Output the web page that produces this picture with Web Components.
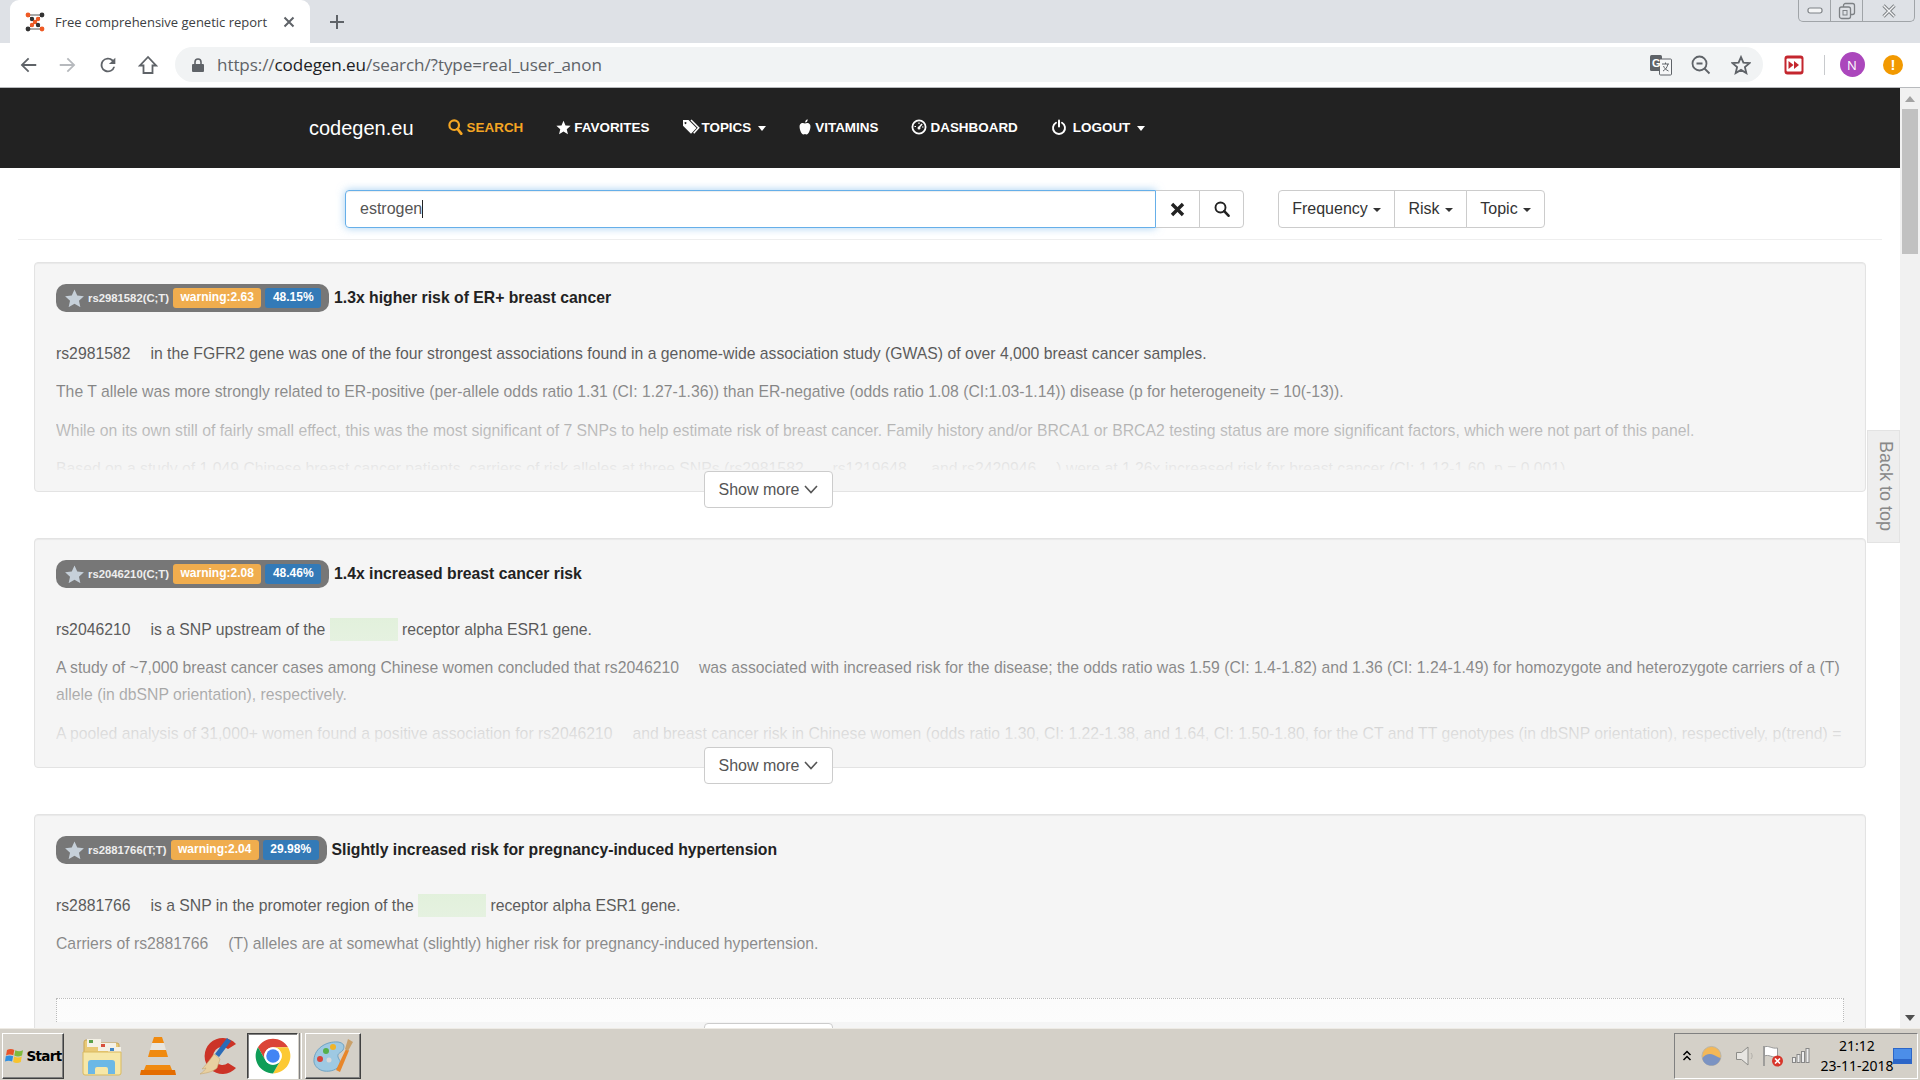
<!DOCTYPE html>
<html lang="en">
<head>
<meta charset="utf-8">
<title>Free comprehensive genetic report</title>
<style>
  html, body { margin: 0; padding: 0; height: 100%; overflow: hidden; background: #fff; }
  body { font-family: "Liberation Sans", Arial, sans-serif; }
</style>
</head>
<body>
<browser-window>
  <chrome-tabs slot="tabs" title="Free comprehensive genetic report"></chrome-tabs>
  <chrome-toolbar slot="toolbar" url-origin="codegen.eu" url-path="/search/?type=real_user_anon"></chrome-toolbar>
  <page-scrollbar slot="scrollbar"></page-scrollbar>
  <win-taskbar slot="taskbar"></win-taskbar>

  <site-navbar></site-navbar>
  <search-bar value="estrogen"></search-bar>

  <snp-card rs="rs2981582(C;T)" warning="warning:2.63" freq="48.15%" heading="1.3x higher risk of ER+ breast cancer">
    <p>rs2981582<snp-gap></snp-gap>in the FGFR2 gene was one of the four strongest associations found in a genome-wide association study (GWAS) of over 4,000 breast cancer samples.</p>
    <p>The T allele was more strongly related to ER-positive (per-allele odds ratio 1.31 (CI: 1.27-1.36)) than ER-negative (odds ratio 1.08 (CI:1.03-1.14)) disease (p for heterogeneity = 10(-13)).</p>
    <p>While on its own still of fairly small effect, this was the most significant of 7 SNPs to help estimate risk of breast cancer. Family history and/or BRCA1 or BRCA2 testing status are more significant factors, which were not part of this panel.</p>
    <p>Based on a study of 1,049 Chinese breast cancer patients, carriers of risk alleles at three SNPs (rs2981582<snp-gap></snp-gap>, rs1219648<snp-gap></snp-gap> and rs2420946<snp-gap></snp-gap>) were at 1.26x increased risk for breast cancer (CI: 1.12-1.60, p = 0.001).</p>
  </snp-card>

  <snp-card rs="rs2046210(C;T)" warning="warning:2.08" freq="48.46%" heading="1.4x increased breast cancer risk">
    <p>rs2046210<snp-gap></snp-gap>is a SNP upstream of the <gene-mark></gene-mark> receptor alpha ESR1 gene.</p>
    <p>A study of ~7,000 breast cancer cases among Chinese women concluded that rs2046210<snp-gap></snp-gap>was associated with increased risk for the disease; the odds ratio was 1.59 (CI: 1.4-1.82) and 1.36 (CI: 1.24-1.49) for homozygote and heterozygote carriers of a (T) allele (in dbSNP orientation), respectively.</p>
    <p>A pooled analysis of 31,000+ women found a positive association for rs2046210<snp-gap></snp-gap>and breast cancer risk in Chinese women (odds ratio 1.30, CI: 1.22-1.38, and 1.64, CI: 1.50-1.80, for the CT and TT genotypes (in dbSNP orientation), respectively, p(trend) =</p>
  </snp-card>

  <snp-card rs="rs2881766(T;T)" warning="warning:2.04" freq="29.98%" heading="Slightly increased risk for pregnancy-induced hypertension">
    <p>rs2881766<snp-gap></snp-gap>is a SNP in the promoter region of the <gene-mark></gene-mark> receptor alpha ESR1 gene.</p>
    <p>Carriers of rs2881766<snp-gap></snp-gap>(T) alleles are at somewhat (slightly) higher risk for pregnancy-induced hypertension.</p>
    <snp-embed></snp-embed>
  </snp-card>

  <back-to-top></back-to-top>
</browser-window>

<script>
const navIcons = {
  search: '<svg width="15" height="16" viewBox="0 0 15 16"><circle cx="6.2" cy="6.2" r="4.8" fill="none" stroke="currentColor" stroke-width="2.2"/><path d="M9.6 10l3.6 4.6" stroke="currentColor" stroke-width="2.8" stroke-linecap="round"/></svg>',
  star: '<svg width="15" height="15" viewBox="0 0 24 24"><path fill="currentColor" d="M12 1l3.2 7.6 8.2.7-6.2 5.4 1.9 8L12 18.4 4.900 22.700l1.900-8L.6 9.300l8.200-.7z"/></svg>',
  tags: '<svg width="18" height="16" viewBox="0 0 18 16"><path fill="currentColor" d="M1 1h5.500l8 8-5.500 5.800-8-8zM3.500 3a1 1 0 1 0 .01 0z" fill-rule="evenodd"/><path fill="none" stroke="currentColor" stroke-width="1.500" d="M9 1l7.700 7.800-5 5.400"/></svg>',
  apple: '<svg width="12" height="16" viewBox="0 0 12 16"><path fill="currentColor" d="M6 4.500C7.500 3.800 10.500 3.600 11.300 6.200 12 9.200 9.800 15.500 7.500 15.500 6.800 15.500 6.400 15 6 15 5.600 15 5.200 15.500 4.500 15.500 2.200 15.500 0 9.200.7 6.200 1.500 3.600 4.500 3.800 6 4.500zM6.200 3.600C6 2 7 .6 8.600.2 8.900 1.900 7.800 3.300 6.200 3.600z"/></svg>',
  dashboard: '<svg width="16" height="16" viewBox="0 0 16 16"><circle cx="8" cy="8" r="6.600" fill="none" stroke="currentColor" stroke-width="1.800"/><path d="M8 8.500l3-3.500" stroke="currentColor" stroke-width="1.600"/><path d="M3.500 7.500h1.500M11 8h1.500M8 3.500v1.500" stroke="currentColor" stroke-width="1.200"/><circle cx="8" cy="9" r="1.500" fill="currentColor"/></svg>',
  power: '<svg width="16" height="17" viewBox="0 0 16 17"><path d="M5 3.800a6 6 0 1 0 6 0" fill="none" stroke="currentColor" stroke-width="1.900" stroke-linecap="round"/><path d="M8 1.500v6" stroke="currentColor" stroke-width="2" stroke-linecap="round"/></svg>',
}

// Tabs row, with the window buttons on the far right
class ChromeTabs extends HTMLElement {
  connectedCallback() {
    const shadow = this.attachShadow({ mode: 'open' })
    shadow.innerHTML = `
      <style>
        :host { display: flex; height: 43px; background: #dee1e6; font-family: "Open Sans", sans-serif; }
        .tab {
          display: flex;
          align-items: center;
          box-sizing: border-box;
          width: 300px;
          margin-left: 10px;
          padding: 0 15px 0 15px;
          background: #fff;
          border-radius: 9px 9px 0 0;
          gap: 10px;
        }
        .title {
          flex: 1;
          white-space: nowrap;
          font-size: 13px;
          color: #3c4043;
        }
        .plus { width: 54px; display: flex; align-items: center; justify-content: center; }
        .win {
          display: flex;
          align-self: flex-start;
          box-sizing: border-box;
          height: 22px;
          margin: 0 5px 0 auto;
          border: 1px solid #a0a4a8;
          border-top: 0;
          border-radius: 0 0 5px 5px;
        }
        .win div { display: flex; align-items: center; justify-content: center; height: 100%; border-left: 1px solid #a0a4a8; }
        .win div:first-child { border-left: 0; }
      </style>
      <div class="tab">
        <svg width="20" height="20" viewBox="0 0 20 20">
          <path d="M3 3h14M3 17h14M3 3l14 14M17 3L3 17" stroke="#555" stroke-width="1"/>
          <circle cx="3" cy="3" r="2.400" fill="#ef5a24"/><circle cx="17" cy="3" r="2.400" fill="#333"/>
          <circle cx="7" cy="7" r="2.200" fill="#333"/><circle cx="13" cy="7" r="2.200" fill="#ef5a24"/>
          <circle cx="10" cy="10" r="2.200" fill="#ef5a24"/>
          <circle cx="7" cy="13" r="2.200" fill="#ef5a24"/><circle cx="13" cy="13" r="2.200" fill="#333"/>
          <circle cx="3" cy="17" r="2.400" fill="#333"/><circle cx="17" cy="17" r="2.400" fill="#ef5a24"/>
        </svg>
        <div class="title">${this.getAttribute('title')}</div>
        <svg width="12" height="12" viewBox="0 0 12 12"><path d="M1.500 1.500l9 9M10.500 1.500l-9 9" stroke="#5f6368" stroke-width="2"/></svg>
      </div>
      <div class="plus">
        <svg width="16" height="16" viewBox="0 0 16 16"><path d="M8 1v14M1 8h14" stroke="#5f6368" stroke-width="2"/></svg>
      </div>
      <div class="win">
        <div style="width:31px"><svg width="16" height="8" viewBox="0 0 16 8"><rect x="1" y="1" width="14" height="5" rx="2" fill="#f4f5f6" stroke="#7d8185" stroke-width="1.200"/></svg></div>
        <div style="width:31px"><svg width="18" height="18" viewBox="0 0 18 18"><rect x="5.500" y="1.500" width="11" height="11" rx="2" fill="none" stroke="#7d8185" stroke-width="1.300"/><rect x="1.500" y="5" width="11" height="11.500" rx="2" fill="#dee1e6" stroke="#7d8185" stroke-width="1.300"/><rect x="5" y="8.500" width="4" height="4.500" fill="none" stroke="#7d8185"/></svg></div>
        <div style="width:51px"><svg width="16" height="14" viewBox="0 0 16 14"><path d="M2.500 1.500l11 11M13.500 1.500l-11 11" stroke="#7d8185" stroke-width="3.200"/><path d="M2.500 1.500l11 11M13.500 1.500l-11 11" stroke="#f4f5f6" stroke-width="1.400"/></svg></div>
      </div>
    `
  }
}

// Back / forward / reload / home, the address bar and the extension icons
class ChromeToolbar extends HTMLElement {
  connectedCallback() {
    const shadow = this.attachShadow({ mode: 'open' })
    shadow.innerHTML = `
      <style>
        :host {
          display: flex;
          align-items: center;
          box-sizing: border-box;
          height: 45px;
          padding: 0 0 1px 8px;
          background: #fff;
          border-bottom: 1px solid #b8babd;
          font-family: "Open Sans", sans-serif;
        }
        .btn { display: flex; align-items: center; justify-content: center; width: 40px; height: 34px; flex: none; }
        .address {
          display: flex;
          align-items: center;
          width: 1588px;
          height: 35px;
          margin: 0 11px 0 7px;
          padding-left: 16px;
          box-sizing: border-box;
          background: #f1f3f4;
          border-radius: 18px;
          flex: none;
        }
        .url { flex: 1; margin-left: 12px; font-size: 17.100px; color: #5f6368; white-space: nowrap; letter-spacing: -.1px; }
        .url b { font-weight: 400; color: #202124; }
        .sep { width: 1px; height: 20px; margin: 0 8px 0 10px; background: #c8cacd; flex: none; }
        .avatar {
          display: flex; align-items: center; justify-content: center;
          width: 25px; height: 25px;
          border-radius: 50%;
          background: #ab47bc;
          color: #fff;
          font-size: 13px;
        }
        .alert {
          display: flex; align-items: center; justify-content: center;
          width: 20px; height: 20px;
          border-radius: 50%;
          background: #f29900;
          color: #fff;
          font: bold 15px "Liberation Sans", sans-serif;
        }
      </style>
      <div class="btn"><svg width="22" height="22" viewBox="0 0 24 24"><path fill="#5f6368" d="M21 11H7.800l5.600-5.600L12 4l-8 8 8 8 1.400-1.400L7.800 13H21z"/></svg></div>
      <div class="btn"><svg width="22" height="22" viewBox="0 0 24 24"><path fill="#b6b9bd" d="M3 11h13.200l-5.600-5.600L12 4l8 8-8 8-1.400-1.400 5.600-5.600H3z"/></svg></div>
      <div class="btn"><svg width="22" height="22" viewBox="0 0 24 24"><path fill="#5f6368" d="M17.650 6.350A8 8 0 1 0 19.730 14h-2.080A6 6 0 1 1 12 6c1.660 0 3.140.690 4.220 1.780L13 11h7V4z"/></svg></div>
      <div class="btn"><svg width="20" height="20" viewBox="0 0 20 20"><path d="M10 2L2 10.500h3.500V18h9v-7.500H18z" fill="none" stroke="#5f6368" stroke-width="1.800" stroke-linejoin="miter"/></svg></div>
      <div class="address">
        <svg width="14" height="16" viewBox="0 0 14 16"><path fill="#5f6368" d="M2 7h10a1 1 0 0 1 1 1v6a1 1 0 0 1-1 1H2a1 1 0 0 1-1-1V8a1 1 0 0 1 1-1z"/><path d="M4 7V5a3 3 0 0 1 6 0v2" fill="none" stroke="#5f6368" stroke-width="1.600"/></svg>
        <div class="url">https://<b>${this.getAttribute('url-origin')}</b>${this.getAttribute('url-path')}</div>
        <div class="btn"><svg width="24" height="24" viewBox="0 0 24 24"><rect x="1" y="2" width="12" height="16" rx="1.500" fill="#5f6368"/><rect x="10.500" y="6" width="12" height="16" rx="1" fill="#f6f7f8" stroke="#5f6368"/><text x="3" y="14" font-size="11" font-weight="700" fill="#fff" font-family="Liberation Sans">G</text><path d="M13 11h7M16.500 9.500v1.500M19 11c-1 4-3 6-5 7M14.500 13c1 2.500 2.800 4 5 5" stroke="#5f6368" fill="none" stroke-width="1"/></svg></div>
        <div class="btn"><svg width="20" height="20" viewBox="0 0 20 20"><circle cx="8.500" cy="8.500" r="7" fill="none" stroke="#5f6368" stroke-width="1.800"/><path d="M5.500 8.500h6M13.500 13.500l5 5" stroke="#5f6368" stroke-width="1.800"/></svg></div>
        <div class="btn" style="margin-right:2px"><svg width="20" height="20" viewBox="0 0 24 24"><path d="M12 2.500l2.900 6.700 7.300.6-5.500 4.800 1.700 7.100L12 17.900l-6.400 3.800 1.700-7.100-5.500-4.800 7.300-.6z" fill="none" stroke="#5f6368" stroke-width="2.200"/></svg></div>
      </div>
      <div class="btn"><svg width="20" height="20" viewBox="0 0 20 20"><rect x=".5" y=".5" width="19" height="19" rx="3" fill="#c4262e"/><rect x="2.500" y="3.500" width="15" height="13" rx="1" fill="#fff"/><path d="M4.500 6l5 4-5 4zM10 6l5 4-5 4z" fill="#c4262e"/></svg></div>
      <div class="sep"></div>
      <div class="btn" style="margin-left:-1px"><div class="avatar">N</div></div>
      <div class="btn" style="margin-left:1px"><div class="alert">!</div></div>
    `
  }
}

class SiteNavbar extends HTMLElement {
  connectedCallback() {
    const shadow = this.attachShadow({ mode: 'open' })
    const links = [
      ['search', 'Search', false, true, 4],
      ['star', 'Favorites', false, false, 3],
      ['tags', 'Topics', true, false, 1],
      ['apple', 'Vitamins', false, false, 4],
      ['dashboard', 'Dashboard', false, false, 3],
      ['power', 'Logout', true, false, 6],
    ]
    shadow.innerHTML = `
      <style>
        :host {
          display: flex;
          align-items: center;
          height: 80px;
          padding-left: 309px;
          gap: 33px;
          background: #222;
          color: #fff;
        }
        .brand { font-size: 20px; margin-right: 1px; }
        a { display: flex; align-items: center; font-size: 13.450px; font-weight: 700; text-transform: uppercase; margin-top: -2px; }
        a.active { color: #f5a623; }
        .caret {
          width: 0; height: 0;
          margin-left: 7px;
          margin-top: 2px;
          border-top: 5px solid #fff;
          border-left: 4px solid transparent;
          border-right: 4px solid transparent;
        }
      </style>
      <span class="brand">codegen.eu</span>
      ${links
        .map(
          ([icon, label, caret, active, gap]) => `
        <a class="${active ? 'active' : ''}">
          <span style="display:flex;margin-right:${gap}px">${navIcons[icon]}</span>${label}${caret ? '<span class="caret"></span>' : ''}
        </a>`,
        )
        .join('')}
    `
  }
}

class SearchBar extends HTMLElement {
  connectedCallback() {
    const shadow = this.attachShadow({ mode: 'open' })
    shadow.innerHTML = `
      <style>
        :host {
          display: flex;
          margin: 0 18px 22px;
          padding: 22px 0 11px 327px;
          border-bottom: 1px solid #eee;
          font-size: 16px;
          color: #333;
        }
        .input {
          display: flex;
          align-items: center;
          box-sizing: border-box;
          width: 811px;
          height: 38px;
          padding-left: 14px;
          border: 1px solid #66afe9;
          border-radius: 4px 0 0 4px;
          box-shadow: inset 0 1px 1px rgba(0, 0, 0, .075), 0 0 8px rgba(102, 175, 233, .6);
          color: #555;
        }
        .caret { width: 1px; height: 18px; background: #222; }
        .btn {
          display: flex;
          align-items: center;
          justify-content: center;
          box-sizing: border-box;
          height: 38px;
          border: 1px solid #ccc;
          margin-left: -1px;
          background: #fff;
        }
        .last { border-radius: 0 4px 4px 0; }
        .first { border-radius: 4px 0 0 4px; margin-left: 34px; }
        .tri {
          width: 0; height: 0;
          margin-left: 5px;
          margin-top: 2px;
          border-top: 4.500px solid #333;
          border-left: 4.500px solid transparent;
          border-right: 4.500px solid transparent;
        }
      </style>
      <div class="input">${this.getAttribute('value')}<span class="caret"></span></div>
      <div class="btn" style="width:44px;margin-left:0;border-left:0"><svg width="15" height="15" viewBox="0 0 15 15"><path d="M2 2l11 11M13 2L2 13" stroke="#222" stroke-width="3.400"/></svg></div>
      <div class="btn last" style="width:45px"><svg width="16" height="16" viewBox="0 0 16 16"><circle cx="6.500" cy="6.500" r="5" fill="none" stroke="#222" stroke-width="1.900"/><path d="M10.200 10.200l4.300 4.500" stroke="#222" stroke-width="2.600" stroke-linecap="round"/></svg></div>
      <div class="btn first" style="width:117px">Frequency<span class="tri"></span></div>
      <div class="btn" style="width:73px">Risk<span class="tri"></span></div>
      <div class="btn last" style="width:79px">Topic<span class="tri"></span></div>
    `
  }
}

class SnpBadge extends HTMLElement {
  connectedCallback() {
    const shadow = this.attachShadow({ mode: 'open' })
    shadow.innerHTML = `
      <style>
        :host {
          display: inline-flex;
          align-items: center;
          height: 28px;
          padding: 0 8px 0 9px;
          background: #777;
          border-radius: 10px;
          color: #fff;
          font-weight: 700;
          flex: none;
        }
        svg { margin-right: 4px; }
        .rs { font-size: 11.300px; color: #eee; margin-right: 4px; white-space: nowrap; }
        .label {
          height: 20px;
          padding: 0 7.500px;
          margin-left: 0;
          border-radius: 3px;
          font-size: 12px;
          line-height: 19px;
        }
        .warn { background: #f0ad4e; margin-right: 4px; }
        .freq { background: #337ab7; }
      </style>
      <svg width="19" height="18" viewBox="0 0 24 23"><path fill="#c6d0d9" d="M12 .5l3.500 7.800 8.500.9-6.300 5.700 1.800 8.300L12 18.900l-7.500 4.300 1.800-8.300L0 9.200l8.500-.9z"/></svg>
      <span class="rs">${this.getAttribute('rs')}</span>
      <span class="label warn">${this.getAttribute('warning')}</span>
      <span class="label freq">${this.getAttribute('freq')}</span>
    `
  }
}

// The gap where the site's inline rs link icon does not load
class SnpGap extends HTMLElement {
  connectedCallback() {
    const shadow = this.attachShadow({ mode: 'open' })
    shadow.innerHTML = '<style>:host { display: inline-block; width: 20px; height: 1px; }</style>'
  }
}

class GeneMark extends HTMLElement {
  connectedCallback() {
    const shadow = this.attachShadow({ mode: 'open' })
    shadow.innerHTML = `
      <style>
        :host {
          display: inline-block;
          width: 68px;
          height: 23px;
          vertical-align: -6px;
          background: #dff0d8;
        }
      </style>
    `
  }
}

class SnpEmbed extends HTMLElement {
  connectedCallback() {
    const shadow = this.attachShadow({ mode: 'open' })
    shadow.innerHTML = `
      <style>
        :host {
          display: block;
          position: relative;
          z-index: 1;
          box-sizing: border-box;
          height: 120px;
          margin-top: 41px;
          background: linear-gradient(#fbfbfb, #fff);
          border: 1px dotted #bbb;
        }
      </style>
    `
  }
}

class SnpCard extends HTMLElement {
  connectedCallback() {
    const shadow = this.attachShadow({ mode: 'open' })
    shadow.innerHTML = `
      <style>
        :host {
          display: block;
          position: relative;
          box-sizing: border-box;
          height: 230px;
          margin: 0 34px 46px;
          padding: 21px;
          background: #f5f5f5;
          border: 1px solid #e3e3e3;
          border-radius: 4px;
          box-shadow: inset 0 1px 1px rgba(0, 0, 0, .05);
          color: #333;
          font-size: 15.750px;
          line-height: 27px;
        }
        .content { position: relative; height: 186px; overflow: hidden; }
        .content::after {
          content: '';
          position: absolute;
          inset: 0;
          background: linear-gradient(rgba(245, 245, 245, 0) 20%, #f5f5f5 104%);
        }
        header { display: flex; align-items: center; gap: 5px; height: 28px; margin-bottom: 27.500px; }
        h3 { margin: 0; font-size: 15.750px; font-weight: 700; color: #222; white-space: nowrap; margin-top: -2px; }
        ::slotted(p) { margin: 0 0 11.500px; }
        .more {
          position: absolute;
          z-index: 2;
          top: 208px;
          left: 669px;
          display: flex;
          align-items: center;
          justify-content: center;
          gap: 5px;
          box-sizing: border-box;
          width: 129px;
          height: 37px;
          background: #fff;
          border: 1px solid #ccc;
          border-radius: 4px;
          color: #555;
          font-size: 16px;
        }
      </style>
      <div class="content">
        <header>
          <snp-badge rs="${this.getAttribute('rs')}" warning="${this.getAttribute('warning')}" freq="${this.getAttribute('freq')}"></snp-badge>
          <h3>${this.getAttribute('heading')}</h3>
        </header>
        <slot></slot>
      </div>
      <div class="more">Show more <svg width="14" height="9" viewBox="0 0 14 9"><path d="M1 1l6 6.500L13 1" fill="none" stroke="#555" stroke-width="1.600"/></svg></div>
    `
  }
}

class BackToTop extends HTMLElement {
  connectedCallback() {
    const shadow = this.attachShadow({ mode: 'open' })
    shadow.innerHTML = `
      <style>
        :host {
          position: absolute;
          top: 342px;
          right: 0;
          display: flex;
          align-items: center;
          justify-content: center;
          box-sizing: border-box;
          width: 33px;
          height: 113px;
          padding-left: 3px;
          background: #eee;
          border: 1px solid #e3e3e3;
          color: #888;
          font-size: 18px;
          writing-mode: vertical-rl;
        }
      </style>
      Back to top
    `
  }
}

class PageScrollbar extends HTMLElement {
  connectedCallback() {
    const shadow = this.attachShadow({ mode: 'open' })
    shadow.innerHTML = `
      <style>
        :host {
          display: flex;
          flex-direction: column;
          align-items: center;
          width: 20px;
          height: 100%;
          background: #f1f1f1;
        }
        .up { margin-top: 8px; border-bottom: 6px solid #a3a3a3; border-left: 5px solid transparent; border-right: 5px solid transparent; }
        .thumb { width: 16px; height: 145px; margin-top: 7px; background: #c1c1c1; }
        .down { margin-top: auto; margin-bottom: 7px; border-top: 6px solid #505050; border-left: 5px solid transparent; border-right: 5px solid transparent; }
      </style>
      <div class="up"></div>
      <div class="thumb"></div>
      <div class="down"></div>
    `
  }
}

// Windows classic style taskbar with the launchers and the tray
class WinTaskbar extends HTMLElement {
  connectedCallback() {
    const shadow = this.attachShadow({ mode: 'open' })
    shadow.innerHTML = `
      <style>
        :host {
          display: flex;
          align-items: center;
          box-sizing: border-box;
          height: 52px;
          padding: 2px 2px 0 2px;
          background: #d4d0c8;
          border-top: 1px solid #eeebe5;
          font-family: "Noto Sans", sans-serif;
          color: #000;
        }
        .raised, .sunken {
          display: flex;
          align-items: center;
          justify-content: center;
          box-sizing: border-box;
          height: 46px;
          border: 1px solid;
        }
        .raised { border-color: #fff #404040 #404040 #fff; box-shadow: inset -1px -1px 0 #808080; }
        .sunken { border-color: #404040 #fff #fff #404040; background: #fff; box-shadow: inset 1px 1px 0 #808080; }
        .start { width: 62px; gap: 2px; font: bold 13.500px "DejaVu Sans", sans-serif; letter-spacing: -.7px; }
        .launcher { display: flex; align-items: center; justify-content: center; flex: none; }
        .tray {
          display: flex;
          align-items: center;
          box-sizing: border-box;
          width: 244px;
          height: 46px;
          margin-left: auto;
          padding-left: 7px;
          border: 1px solid;
          border-color: #808080 #fff #fff #808080;
        }
        .clock { width: 76px; margin-left: 9px; font-size: 14px; line-height: 20px; text-align: center; white-space: nowrap; }
      </style>
      <div class="raised start">
        <svg width="20" height="20" viewBox="0 0 20 20">
          <path d="M2 4c2.500-1.300 5-1.300 7.300 0L8.300 9.300C6 8.200 3.500 8.200 1 9.400z" fill="#e8542a"/>
          <path d="M10.300 4.300c2.500 1.300 5 1.300 7.700 0L17 9.600c-2.700 1.300-5.300 1.300-7.700 0z" fill="#7fba3c"/>
          <path d="M.8 10.300c2.500-1.200 5-1.200 7.300-.1L7.100 15.500C4.800 14.400 2.400 14.400 0 15.600z" fill="#2f8fe0"/>
          <path d="M9.100 10.600c2.500 1.300 5 1.300 7.700 0l-1 5.300c-2.700 1.300-5.200 1.300-7.700 0z" fill="#f7c32e"/>
        </svg>
        Start
      </div>
      <div style="width:7px"></div>
      <div class="launcher" style="width:62px">
        <svg width="42" height="40" viewBox="0 0 42 40">
          <path d="M3 6a2 2 0 0 1 2-2h10l3 3h18a2 2 0 0 1 2 2v26a2 2 0 0 1-2 2H5a2 2 0 0 1-2-2z" fill="#e9c976" stroke="#c8a557"/>
          <rect x="6" y="3" width="14" height="8" fill="#f4f1e6"/><rect x="8" y="4" width="4" height="3" fill="#5aa04a"/>
          <rect x="17" y="7" width="18" height="8" fill="#f4f1e6"/><rect x="20" y="8" width="4" height="3" fill="#d8503c"/>
          <rect x="27" y="11" width="13" height="7" fill="#f4f1e6"/><rect x="29" y="12" width="4" height="3" fill="#3f86c8"/>
          <path d="M2 16h38v21a2 2 0 0 1-2 2H4a2 2 0 0 1-2-2z" fill="#f6e7a8" stroke="#d9b95f"/>
          <path d="M7 38V27a3 3 0 0 1 3-3h21a3 3 0 0 1 3 3v11h-7v-5a2 2 0 0 0-2-2H16a2 2 0 0 0-2 2v5z" fill="#6bb8e6"/>
        </svg>
      </div>
      <div class="launcher" style="width:50px">
        <svg width="36" height="40" viewBox="0 0 36 40">
          <path d="M14 1h8l2 6H12z" fill="#f08a10"/><path d="M12 7h12l2 7H10z" fill="#e8e6e0"/><path d="M10 14h16l2 7H8z" fill="#f08a10"/><path d="M8 21h20l2 8H6z" fill="#d4d2cc"/>
          <path d="M6 29h24l2 5H4z" fill="#f08a10"/><path d="M1 34h34l1 5H0z" fill="#e46c00"/>
        </svg>
      </div>
      <div class="launcher" style="width:72px">
        <svg width="42" height="42" viewBox="0 0 42 42">
          <path d="M38 9A18 18 0 1 0 38 33L30 28A9 9 0 1 1 30 14z" fill="#cc3327"/>
          <path d="M29 3l4 3-12 16-4-3z" fill="#2a6bb8"/>
          <path d="M16 19l6 5-3 9c-3 3-9 5-17 6 3-2 5-4 6-6l-4 1c3-3 7-8 12-15z" fill="#e8d0a0" stroke="#c8a870" stroke-width=".6"/>
        </svg>
      </div>
      <div class="sunken" style="width:51px;margin-left:-8px">
        <svg width="38" height="38" viewBox="0 0 48 48">
          <path d="M24 13H43A22 22 0 0 0 5 13L14.470 29.500A11 11 0 0 1 24 13z" fill="#db4437"/>
          <path d="M43 13A22 22 0 0 1 24 46L33.530 29.500A11 11 0 0 0 24 13z" fill="#fcc934"/>
          <path d="M24 46A22 22 0 0 1 5 13L14.470 29.500A11 11 0 0 0 33.530 29.500z" fill="#0f9d58"/>
          <circle cx="24" cy="24" r="11" fill="#fff"/><circle cx="24" cy="24" r="8.500" fill="#4285f4"/>
        </svg>
      </div>
      <div style="width:3px;height:46px;margin:0 3px 0 1px;border-left:1px solid #808080;border-right:1px solid #fff;box-sizing:border-box"></div>
      <div class="raised" style="width:56px">
        <svg width="42" height="40" viewBox="0 0 42 40">
          <path d="M2 26C1 13 14 5 26 6c6 1 7 4 5 8-2 3-6 3-5 7 1 3 3 4 2 7-2 6-10 8-16 7C7 34 3 31 2 26z" fill="#9ec9e2" stroke="#6fa3c4"/>
          <circle cx="8" cy="23" r="3" fill="#d8443a"/><circle cx="14" cy="15" r="3" fill="#55b04a"/><circle cx="21" cy="11" r="3" fill="#f0b429"/><circle cx="17" cy="24" r="2.500" fill="#d8d8d8"/>
          <path d="M24 34L34 13l3 1.500L28 36z" fill="#e8862a"/><path d="M33 13l3-10 5 3-5 9z" fill="#c9a06a"/>
        </svg>
      </div>
      <div class="tray">
        <svg width="10" height="12" viewBox="0 0 10 12"><path d="M1.500 5l3.500-3.500L8.500 5M1.500 10l3.500-3.500L8.500 10" fill="none" stroke="#000" stroke-width="1.500"/></svg>
        <svg width="21" height="22" viewBox="0 0 22 22" style="margin-left:9px"><circle cx="11" cy="11" r="10" fill="#f3b858" stroke="#b8b4aa"/><path d="M1.500 13c3-4 8-5 12-3s6 3 7 3c-1 5-5 8-9.500 8-5 0-9-3-9.500-8z" fill="#7b93c2"/></svg>
        <svg width="20" height="22" viewBox="0 0 20 22" style="margin-left:13px"><path d="M1.500 7.500h5L13 2v18L6.500 14.500h-5z" fill="#e8e6e2" stroke="#8c8c88"/><path d="M16 8c1.500 2 1.500 4 0 6" fill="none" stroke="#b0aea8"/></svg>
        <svg width="22" height="22" viewBox="0 0 22 22" style="margin-left:7px"><path d="M2 1v20" stroke="#888" stroke-width="1.400"/><path d="M2.500 2c4-2 7 2 13 1v9c-5 1-9-3-13-1z" fill="#fff" stroke="#999"/><circle cx="15.500" cy="16" r="5.500" fill="#d8352a"/><path d="M13 13.500l5 5M18 13.500l-5 5" stroke="#fff" stroke-width="1.600"/></svg>
        <svg width="18" height="15" viewBox="0 0 18 15" style="margin-left:8px"><g fill="#eee" stroke="#888"><rect x=".5" y="9.500" width="3" height="5"/><rect x="5" y="6.500" width="3" height="8"/><rect x="9.500" y="3.500" width="3" height="11"/><rect x="14" y=".5" width="3" height="14"/></g></svg>
        <div class="clock">21:12<br>23-11-2018</div>
        <svg width="19" height="16" viewBox="0 0 19 16" style="margin-left:-2px"><rect width="19" height="16" fill="#2c66c8"/><rect x="1" y="1" width="17" height="10" fill="#4c8ee8"/></svg>
      </div>
    `
  }
}

class BrowserWindow extends HTMLElement {
  connectedCallback() {
    const shadow = this.attachShadow({ mode: 'open' })
    shadow.innerHTML = `
      <style>
        :host { display: flex; flex-direction: column; height: 100vh; overflow: hidden; }
        .view { display: flex; flex: 1; min-height: 0; }
        .page { position: relative; flex: 1; min-width: 0; overflow: hidden; }
      </style>
      <slot name="tabs"></slot>
      <slot name="toolbar"></slot>
      <div class="view">
        <div class="page"><slot></slot></div>
        <slot name="scrollbar"></slot>
      </div>
      <slot name="taskbar"></slot>
    `
  }
}

customElements.define('snp-gap', SnpGap)
customElements.define('gene-mark', GeneMark)
customElements.define('snp-embed', SnpEmbed)
customElements.define('snp-badge', SnpBadge)
customElements.define('snp-card', SnpCard)
customElements.define('back-to-top', BackToTop)
customElements.define('page-scrollbar', PageScrollbar)
customElements.define('win-taskbar', WinTaskbar)
customElements.define('search-bar', SearchBar)
customElements.define('site-navbar', SiteNavbar)
customElements.define('chrome-tabs', ChromeTabs)
customElements.define('chrome-toolbar', ChromeToolbar)
customElements.define('browser-window', BrowserWindow)
</script>
</body>
</html>
